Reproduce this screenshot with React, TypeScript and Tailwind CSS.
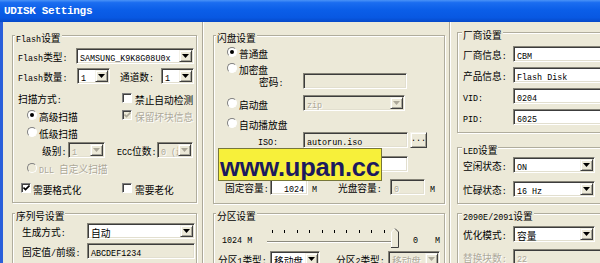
import React from "react";

function T({ t, dis }: { t: string; dis?: boolean }) {
  const parts = t.split(/([\x20-\x7e]+)/).filter((p) => p.length > 0);
  return (
    <span
      className={`whitespace-pre leading-[12px] ${
        dis ? "text-[#aca899] [text-shadow:1px_1px_0_#fff]" : "text-black"
      }`}
    >
      {parts.map((p, i) =>
        /^[\x20-\x7e]+$/.test(p) ? (
          <span key={i} className="font-['Liberation_Mono',monospace] text-[8.4px]">
            {p}
          </span>
        ) : (
          <span key={i} className="font-['Noto_Sans_CJK_SC',sans-serif] text-[9.7px]">
            {p}
          </span>
        )
      )}
    </span>
  );
}

const SUNK =
  "border border-t-[#858377] border-l-[#858377] border-b-white border-r-white shadow-[inset_1px_1px_0_#3c3c3c,inset_-1px_-1px_0_#e2dfcf]";

function Row({ cls, children }: { cls: string; children?: React.ReactNode }) {
  return <div className={`flex items-center shrink-0 ${cls}`}>{children}</div>;
}

function Lbl({ cls, t, dis }: { cls: string; t: string; dis?: boolean }) {
  return (
    <div className={`shrink-0 flex items-center ${cls}`}>
      <T t={t} dis={dis} />
    </div>
  );
}

function Input({
  cls,
  v = "",
  dis,
  ro,
  right,
}: {
  cls: string;
  v?: string;
  dis?: boolean;
  ro?: boolean;
  right?: boolean;
}) {
  return (
    <div
      className={`${cls} h-[16px] shrink-0 flex items-center overflow-hidden ${
        right ? "justify-end pr-[3px]" : "pl-[3px]"
      } ${SUNK} ${dis || ro ? "bg-[#ece9d8]" : "bg-white"}`}
    >
      <T t={v} dis={dis} />
    </div>
  );
}

function Combo({ cls, v, dis }: { cls: string; v: string; dis?: boolean }) {
  return (
    <div
      className={`${cls} h-[16px] shrink-0 flex items-center ${SUNK} ${
        dis ? "bg-[#ece9d8]" : "bg-white"
      }`}
    >
      <div className="flex-1 min-w-0 pl-[3px] overflow-hidden flex items-center">
        <T t={v} dis={dis} />
      </div>
      <div className="w-[13px] h-[12px] mr-[1px] shrink-0 flex items-center justify-center bg-[#ece9d8] border border-t-[#f4f2e8] border-l-[#f4f2e8] border-b-[#404040] border-r-[#404040] shadow-[inset_1px_1px_0_#fff,inset_-1px_-1px_0_#a8a699]">
        <svg width="7" height="4" viewBox="0 0 7 4">
          <path d="M0 0h7L3.5 4z" fill={dis ? "#aca899" : "#000"} />
        </svg>
      </div>
    </div>
  );
}

function Radio({ on, dis }: { on?: boolean; dis?: boolean }) {
  return (
    <div
      className={`w-[10px] h-[10px] shrink-0 rounded-full border border-t-[#808080] border-l-[#808080] border-r-white border-b-white flex items-center justify-center ${
        dis ? "bg-[#ece9d8]" : "bg-white"
      }`}
    >
      {on ? <div className="w-[4px] h-[4px] rounded-full bg-black" /> : null}
    </div>
  );
}

function Check({ on, dis }: { on?: boolean; dis?: boolean }) {
  return (
    <div
      className={`w-[10px] h-[10px] shrink-0 border border-t-[#808080] border-l-[#808080] border-r-white border-b-white shadow-[inset_1px_1px_0_#404040] flex items-center justify-center ${
        dis ? "bg-[#ece9d8]" : "bg-white"
      }`}
    >
      {on ? (
        <svg width="7" height="6" viewBox="0 0 7 6">
          <path
            d="M0.5 2.5L2.5 4.5L6.5 0.5"
            stroke={dis ? "#aca899" : "#000"}
            strokeWidth="1.6"
            fill="none"
          />
        </svg>
      ) : null}
    </div>
  );
}

function Group({
  title,
  cls,
  lg,
  children,
}: {
  title: string;
  cls: string;
  lg: string;
  children?: React.ReactNode;
}) {
  return (
    <fieldset
      className={`${cls} shrink-0 border border-[#b0ad9d] shadow-[inset_1px_1px_0_#fff,1px_1px_0_#fff]`}
    >
      <legend className={`${lg} px-[1px] h-[12px] leading-[12px] bg-[#ece9d8]`}>
        <T t={title} />
      </legend>
      <div className="flex flex-col">{children}</div>
    </fieldset>
  );
}

function Slider() {
  const ticks = Array.from({ length: 10 }, (_, i) => 5 + i * 12.4);
  return (
    <svg width="133" height="22" viewBox="0 0 133 22" className="shrink-0">
      {ticks.map((x, i) => (
        <rect key={i} x={Math.round(x)} y="3" width="1" height="3" fill="#000" />
      ))}
      <rect x="0" y="14" width="131" height="1" fill="#8c8a7e" />
      <rect x="0" y="15" width="131" height="1" fill="#fff" />
      <path d="M124 20V5L128 1L132 5V20Z" fill="#ece9d8" />
      <path d="M124.5 20V5L128 1.5" stroke="#fff" fill="none" />
      <path d="M128 1.5L131.5 5V20.5H124" stroke="#404040" fill="none" />
    </svg>
  );
}

export default function App() {
  return (
    <div className="relative w-[600px] h-[263px] overflow-hidden bg-[#ece9d8] font-['Noto_Sans_CJK_SC',sans-serif]">
      <div className="h-[22px] flex items-center pl-[4px] bg-[linear-gradient(180deg,#4a93f7_0%,#1b6df0_12%,#0b5ee8_45%,#0858e2_80%,#0649c9_100%)]">
        <span className="font-['Liberation_Mono',monospace] font-bold text-[11px] leading-none text-white tracking-[-0.3px]">
          UDISK Settings
        </span>
      </div>
      <div className="flex h-[241px]">
        <div className="w-[3px] shrink-0 bg-[#2a5fda]" />
        {/* left column */}
        <div className="w-[200px] shrink-0 border-r border-r-[#aca899] flex flex-col">
          <Group cls="ml-[9px] mt-[7px] w-[185px] h-[174px]" lg="ml-[2px]" title="Flash设置">
            <Row cls="mt-[7px] h-[16px] pl-[5px]">
              <Lbl cls="w-[58px]" t="Flash类型:" />
              <Combo cls="w-[118px]" v="SAMSUNG_K9K8G08U0x" />
            </Row>
            <Row cls="mt-[4px] h-[16px] pl-[5px]">
              <Lbl cls="w-[59px]" t="Flash数量:" />
              <Combo cls="w-[33px]" v="1" />
              <Lbl cls="ml-[10px] w-[41px]" t="通道数:" />
              <Combo cls="w-[33px]" v="1" />
            </Row>
            <Row cls="mt-[7px] h-[14px] pl-[5px]">
              <Lbl cls="w-[104px]" t="扫描方式:" />
              <Check />
              <Lbl cls="ml-[3px]" t="禁止自动检测" />
            </Row>
            <Row cls="mt-[3px] h-[14px] pl-[14px]">
              <div className="w-[95px] shrink-0 flex items-center">
                <Radio on />
                <Lbl cls="ml-[2px]" t="高级扫描" />
              </div>
              <Check on dis />
              <Lbl cls="ml-[3px]" t="保留坏块信息" dis />
            </Row>
            <Row cls="mt-[3px] h-[14px] pl-[14px]">
              <Radio />
              <Lbl cls="ml-[2px]" t="低级扫描" />
            </Row>
            <Row cls="mt-[3px] h-[16px] pl-[29px]">
              <Lbl cls="w-[26px]" t="级别:" />
              <Combo cls="w-[37px]" v="1" dis />
              <Lbl cls="ml-[12px] w-[40px]" t="ECC位数:" />
              <Combo cls="w-[36px]" v="0 (最" dis />
            </Row>
            <Row cls="mt-[3px] h-[14px] pl-[14px]">
              <Radio dis />
              <Lbl cls="ml-[2px]" t="DLL 自定义扫描" dis />
            </Row>
            <Row cls="mt-[6px] h-[14px] pl-[8px]">
              <div className="w-[101px] shrink-0 flex items-center">
                <Check on />
                <Lbl cls="ml-[2px]" t="需要格式化" />
              </div>
              <Check />
              <Lbl cls="ml-[3px]" t="需要老化" />
            </Row>
          </Group>
          <Group cls="ml-[9px] mt-[4px] w-[185px] h-[60px]" lg="ml-[2px]" title="序列号设置">
            <Row cls="mt-[4px] h-[16px] pl-[9px]">
              <Lbl cls="w-[65px]" t="生成方式:" />
              <Combo cls="w-[108px]" v="自动" />
            </Row>
            <Row cls="mt-[4px] h-[16px] pl-[9px]">
              <Lbl cls="w-[65px]" t="固定值/前缀:" />
              <Input cls="w-[108px]" v="ABCDEF1234" ro />
            </Row>
            <Row cls="mt-[4px] h-[16px] pl-[9px]">
              <Lbl cls="w-[65px]" t="递增:" />
              <Input cls="w-[108px]" v="001" />
            </Row>
          </Group>
        </div>
        {/* middle column */}
        <div className="w-[247px] shrink-0 border-l border-l-white border-r border-r-[#aca899] flex flex-col">
          <Group cls="ml-[9px] mt-[7px] w-[232px] h-[175px]" lg="ml-[2px]" title="闪盘设置">
            <Row cls="mt-[5px] h-[12px] pl-[13px]">
              <Radio on />
              <Lbl cls="ml-[2px]" t="普通盘" />
            </Row>
            <Row cls="mt-[4px] h-[12px] pl-[13px]">
              <Radio />
              <Lbl cls="ml-[2px]" t="加密盘" />
            </Row>
            <Row cls="-mt-[1px] h-[16px] pl-[45px]">
              <Lbl cls="w-[44px]" t="密码:" />
              <Input cls="w-[104px]" dis />
            </Row>
            <Row cls="mt-[6px] h-[16px] pl-[13px]">
              <div className="w-[76px] shrink-0 flex items-center">
                <Radio />
                <Lbl cls="ml-[2px]" t="启动盘" />
              </div>
              <Combo cls="w-[102px]" v="zip" dis />
            </Row>
            <Row cls="mt-[6px] h-[12px] pl-[13px]">
              <Radio />
              <Lbl cls="ml-[2px]" t="自动播放盘" />
            </Row>
            <Row cls="mt-[3px] h-[16px] pl-[44px]">
              <Lbl cls="w-[45px]" t="ISO:" />
              <Input cls="w-[105px]" v="autorun.iso" ro />
              <div className="ml-[2px] w-[17px] h-[16px] shrink-0 flex items-end justify-center pb-[2px] bg-[#ece9d8] border border-t-[#f4f2e8] border-l-[#f4f2e8] border-b-[#404040] border-r-[#404040] shadow-[inset_1px_1px_0_#fff,inset_-1px_-1px_0_#a8a699]">
                <T t="..." />
              </div>
            </Row>
            <Row cls="mt-[8px] h-[16px] pl-[45px]">
              <Lbl cls="w-[44px]" t="卷标:" />
              <Input cls="w-[105px]" />
            </Row>
            <Row cls="mt-[7px] h-[16px] pl-[11px]">
              <Lbl cls="w-[45px]" t="固定容量:" />
              <Input cls="w-[38px]" v="1024" right />
              <Lbl cls="ml-[4px] w-[26px]" t="M" />
              <Lbl cls="w-[52px]" t="光盘容量:" />
              <Input cls="w-[35px]" v="0" dis />
              <Lbl cls="ml-[5px]" t="M" />
            </Row>
          </Group>
          <Group cls="ml-[9px] mt-[3px] w-[232px] h-[60px]" lg="ml-[2px]" title="分区设置">
            <Row cls="mt-[8px] h-[22px] pl-[8px]">
              <Lbl cls="w-[45px]" t="1024 M" />
              <Slider />
              <Lbl cls="ml-[13px]" t="0" />
              <Lbl cls="ml-[17px]" t="M" />
            </Row>
            <Row cls="mt-[2px] h-[16px] pl-[4px]">
              <Lbl cls="w-[52px]" t="分区1类型:" />
              <Combo cls="w-[50px]" v="移动盘" />
              <Lbl cls="ml-[16px] w-[52px]" t="分区2类型:" />
              <Combo cls="w-[52px]" v="移动盘" dis />
            </Row>
          </Group>
        </div>
        {/* right column */}
        <div className="flex-1 min-w-0 border-l border-l-white flex flex-col">
          <Group cls="ml-[6px] mt-[4px] w-[160px] h-[107px]" lg="ml-[4px]" title="厂商设置">
            <Row cls="mt-[8px] h-[16px] pl-[5px]">
              <Lbl cls="w-[50px]" t="厂商信息:" />
              <Input cls="w-[95px]" v="CBM" />
            </Row>
            <Row cls="mt-[5px] h-[16px] pl-[5px]">
              <Lbl cls="w-[50px]" t="产品信息:" />
              <Input cls="w-[95px]" v="Flash Disk" />
            </Row>
            <Row cls="mt-[5px] h-[16px] pl-[5px]">
              <Lbl cls="w-[50px]" t="VID:" />
              <Input cls="w-[95px]" v="0204" />
            </Row>
            <Row cls="mt-[5px] h-[16px] pl-[5px]">
              <Lbl cls="w-[50px]" t="PID:" />
              <Input cls="w-[95px]" v="6025" />
            </Row>
          </Group>
          <Group cls="ml-[6px] mt-[8px] w-[160px] h-[63px]" lg="ml-[4px]" title="LED设置">
            <Row cls="mt-[4px] h-[16px] pl-[5px]">
              <Lbl cls="w-[50px]" t="空闲状态:" />
              <Combo cls="w-[82px]" v="ON" />
            </Row>
            <Row cls="mt-[8px] h-[16px] pl-[5px]">
              <Lbl cls="w-[50px]" t="忙碌状态:" />
              <Combo cls="w-[82px]" v="16 Hz" />
            </Row>
          </Group>
          <Group cls="ml-[6px] mt-[3px] w-[160px] h-[60px]" lg="ml-[4px]" title="2090E/2091设置">
            <Row cls="mt-[7px] h-[16px] pl-[5px]">
              <Lbl cls="w-[50px]" t="优化模式:" />
              <Combo cls="w-[82px]" v="容量" />
            </Row>
            <Row cls="mt-[7px] h-[16px] pl-[5px]">
              <Lbl cls="w-[50px]" t="替换块数:" dis />
              <Input cls="w-[95px]" v="22" dis />
            </Row>
          </Group>
        </div>
      </div>
      {/* watermark overlay */}
      <div className="absolute left-[218px] top-[148px] w-[164px] h-[33px] overflow-hidden bg-[#f7f03a] border border-[#77773a] pl-[1px] pt-[5px]">
        <span className="block font-['Liberation_Sans',Arial,sans-serif] font-bold text-[25.5px] leading-[26px] tracking-[-0.2px] text-[#1c1a5e] whitespace-nowrap">
          www.upan.cc
        </span>
      </div>
    </div>
  );
}
